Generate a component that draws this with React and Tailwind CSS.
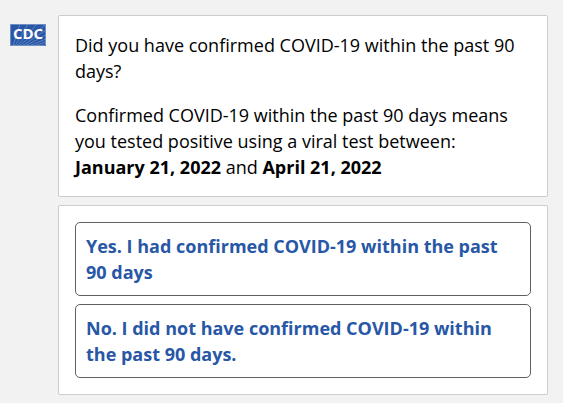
import React, { useState } from 'react';

const answers = [
  { id: 'yes', label: 'Yes. I had confirmed COVID-19 within the past 90 days' },
  { id: 'no', label: 'No. I did not have confirmed COVID-19 within the past 90 days.' },
];

const CdcLogo = () => (
  <svg className="mt-[9px] h-[22px] w-9 shrink-0 overflow-visible" viewBox="0 0 36 22" role="img" aria-label="CDC">
    <rect width="36" height="22" fill="#2857a6" />
    <g stroke="#a9bde0" strokeWidth="0.4" fill="none">
      <path d="M3 22 L10 0 M5 22 L18 0 M7 22 L27 0 M9 22 L35 1 M12 22 L36 6 M15 22 L36 11 M19 22 L36 15 M24 22 L36 18" />
    </g>
    <rect x="0.5" y="0.5" width="35" height="21" fill="none" stroke="#8ba4d2" strokeWidth="0.7" />
    <text x="18" y="15" textAnchor="middle" fontFamily="'Open Sans', sans-serif" fontSize="15" fontWeight="700" fill="#fff">
      CDC
    </text>
  </svg>
);

const App = () => {
  const [selected, setSelected] = useState(null);

  return (
    <div className="flex min-h-screen items-start gap-3 bg-[#f2f2f2] py-[15px] pr-[15px] pl-[10px] font-['Open_Sans',sans-serif] text-lg leading-[26px] text-black">
      <CdcLogo />

      <main className="flex min-w-0 flex-1 flex-col gap-2">
        {/* Question */}
        <section className="space-y-[18px] rounded-xs border border-[#cccccc] bg-white p-4">
          <p>Did you have confirmed COVID-19 within the past 90 days?</p>
          <p>
            Confirmed COVID-19 within the past 90 days means you tested positive using a viral test between:{' '}
            <br />
            <strong>January 21, 2022</strong> and <strong>April 21, 2022</strong>
          </p>
        </section>

        {/* Answers */}
        <section className="flex flex-col gap-2 rounded-xs border border-[#cccccc] bg-white p-4">
          {answers.map((a) => (
            <button
              key={a.id}
              type="button"
              aria-pressed={selected === a.id}
              onClick={() => setSelected(a.id)}
              className="cursor-pointer rounded-[5px] border border-[#606060] bg-white p-[10px] text-left font-bold text-[#2857a6] hover:bg-gray-50"
            >
              {a.label}
            </button>
          ))}
        </section>
      </main>
    </div>
  );
};

export default App;
